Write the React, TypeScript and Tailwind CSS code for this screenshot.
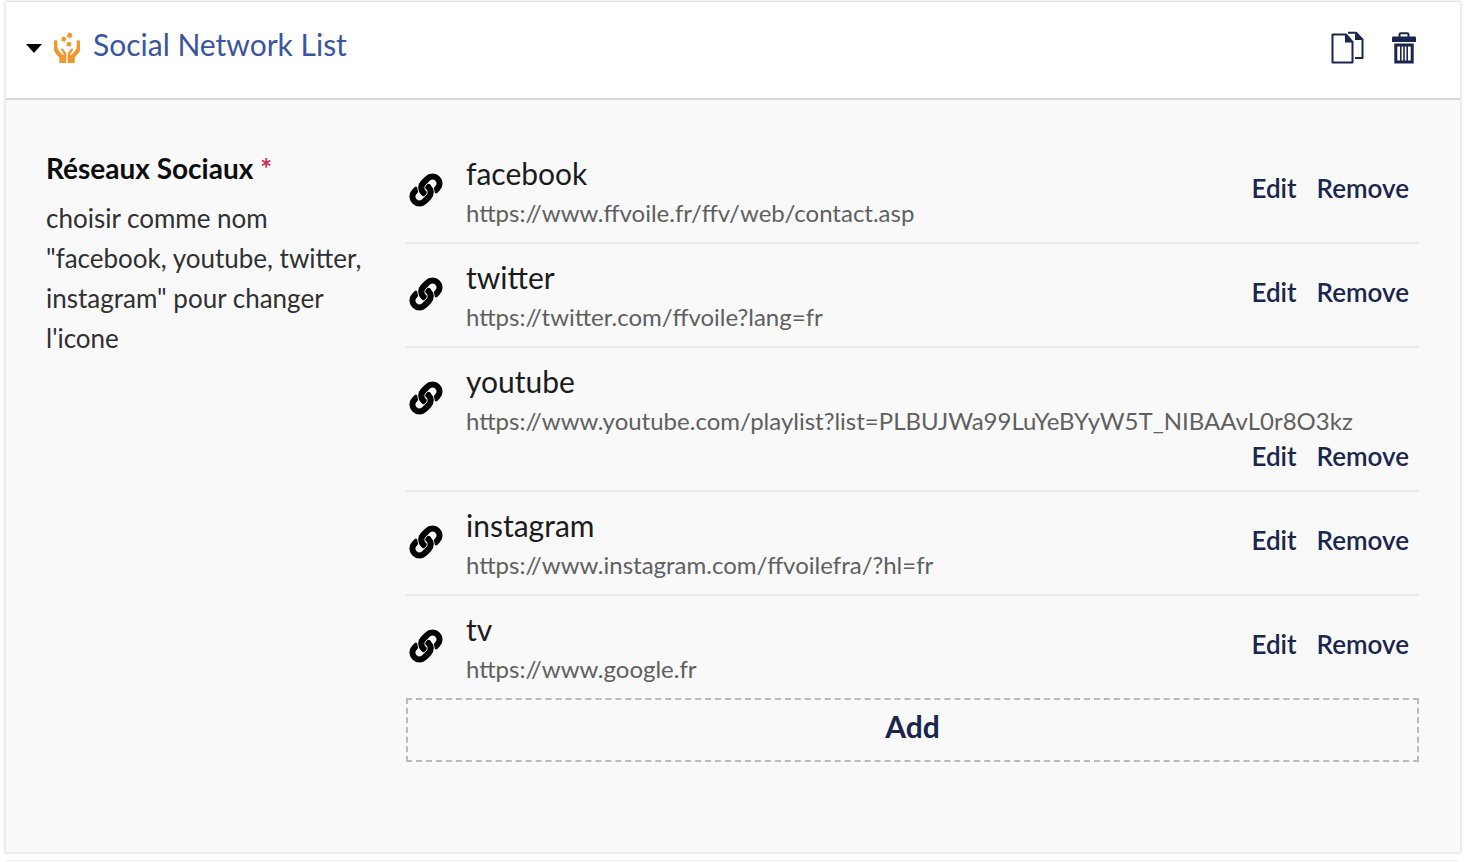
import React from 'react';
import { FaLink } from 'react-icons/fa';

type Network = { name: string; url: string };

const networks: Network[] = [
  { name: 'facebook', url: 'https://www.ffvoile.fr/ffv/web/contact.asp' },
  { name: 'twitter', url: 'https://twitter.com/ffvoile?lang=fr' },
  {
    name: 'youtube',
    url: 'https://www.youtube.com/playlist?list=PLBUJWa99LuYeBYyW5T_NIBAAvL0r8O3kz',
  },
  { name: 'instagram', url: 'https://www.instagram.com/ffvoilefra/?hl=fr' },
  { name: 'tv', url: 'https://www.google.fr' },
];

function HandsIcon() {
  return (
    <svg viewBox="0 0 26 32" className="h-8 w-[26px]" fill="#f0982c" aria-hidden="true">
      <path d="M0 9.500Q0 8 1.700 8t1.700 1.500v6.500l1.600 3 3.200 3.600q.8.700 1.300.2t0-1.300l-2.300-3.300q-.6-1.300.4-1.700 1-.3 1.800.7l2.200 3q.7 1 .7 2.200V31H5.300v-5.500L1 20.500q-1-1.200-1-2.500z" />
      <path d="M26 9.500Q26 8 24.300 8t-1.700 1.500v6.500l-1.600 3-3.200 3.600q-.8.700-1.300.2t0-1.300l2.300-3.300q.6-1.300-.4-1.700-1-.3-1.800.7l-2.200 3q-.7 1-.7 2.200V31h7v-5.500l4.300-5q1-1.200 1-2.500z" />
      <rect x="13.300" y="1" width="4.800" height="4.800" rx="1.200" transform="rotate(20 15.700 3.400)" />
      <rect x="7.500" y="5" width="4.400" height="4.400" rx="1.200" transform="rotate(20 9.700 7.200)" />
      <rect x="12.700" y="10" width="4.400" height="4.400" rx="1.200" transform="rotate(20 14.900 12.200)" />
    </svg>
  );
}

function CopyIcon() {
  return (
    <svg viewBox="0 0 34 34" className="h-[34px] w-[34px]" fill="none" stroke="#1b264f" strokeWidth="2" strokeLinejoin="round" aria-hidden="true">
      <path d="M2.500 3.500H16l6.500 7.500v20.500h-20z" />
      <path d="M15 3v8.500h7.500z" fill="#1b264f" stroke="none" />
      <path d="M18 1.800h8l6.500 6.700v18.500H25" />
      <path d="M25 1.500V9h7.500z" fill="#1b264f" stroke="none" />
    </svg>
  );
}

function TrashIcon() {
  return (
    <svg viewBox="0 0 24 32" className="h-8 w-6" fill="none" stroke="#1b264f" aria-hidden="true">
      <path d="M7.500 5V2.500q0-1.300 1.300-1.300h6.400q1.300 0 1.300 1.300V5" strokeWidth="2" />
      <path d="M0 5.500q0-1 1-1h22q1 0 1 1V10H0z" fill="#1b264f" stroke="none" />
      <path d="M3.800 13h16.400v17H3.800z" strokeWidth="3" />
      <path d="M8.800 13v17M12 13v17M15.200 13v17" strokeWidth="1.600" />
    </svg>
  );
}

function NetworkRow({ name, url }: Network) {
  return (
    <li className="flex items-start border-b-2 border-[#e9e9eb] pt-[13px] pr-[10px] pb-[9px] pl-1 last:border-transparent">
      <div className="flex h-[74px] w-14 shrink-0 items-center">
        <FaLink className="h-8 w-8 overflow-visible stroke-black stroke-[18px] text-black" aria-hidden="true" />
      </div>
      <div className="flex min-w-0 flex-1 flex-wrap items-center">
        <div className="leading-10">
          <div className="text-[30px] text-[#1c1c1c]">{name}</div>
          <div className="text-2xl leading-10 text-[#606060]">{url}</div>
        </div>
        <div className="ml-auto flex gap-5 pb-[10px] text-[26px] leading-[30px] font-semibold text-[#1b264f]">
          <button type="button" aria-label={`Edit ${name}`}>Edit</button>
          <button type="button" aria-label={`Remove ${name}`}>Remove</button>
        </div>
      </div>
    </li>
  );
}

export default function App() {
  return (
    <div className="bg-white px-[6px] pt-[2px] font-['Lato',sans-serif]">
      <section className="mr-[-2px] bg-[#f9f9f9] shadow-[0_0_3px_1px_rgba(0,0,0,0.15)]">
        <header className="flex h-[98px] items-center justify-between border-b-2 border-[#d8d7d9] bg-white pr-11 pb-1 pl-5">
          <button type="button" className="flex items-center pb-2 text-[30px] leading-10 text-[#3b54a0]">
            <svg viewBox="0 0 16 9" className="mt-2 h-[9px] w-4" aria-hidden="true">
              <path d="M0 0h16L8 9z" fill="#000" />
            </svg>
            <span className="mt-2 mr-[13px] ml-3">
              <HandsIcon />
            </span>
            Social Network List
          </button>
          <div className="flex items-center gap-7">
            <button type="button" aria-label="Copy"><CopyIcon /></button>
            <button type="button" aria-label="Delete"><TrashIcon /></button>
          </div>
        </header>
        <div className="flex items-start gap-10 pt-10 pr-[41px] pb-[90px] pl-10">
          <div className="w-80 shrink-0 pt-2">
            <h2 className="text-[28px] leading-10 font-bold text-[#0d0d0d]">
              Réseaux Sociaux <span className="text-[#cf2f55]">*</span>
            </h2>
            <p className="mt-[10px] text-[26px] leading-10 text-[#303033]">
              choisir comme nom "facebook, youtube, twitter, instagram" pour changer l'icone
            </p>
          </div>
          <div className="min-w-0 flex-1">
            <ul>
              {networks.map((network) => (
                <NetworkRow key={network.name} {...network} />
              ))}
            </ul>
            <button
              type="button"
              className="-mt-[2px] block h-16 w-full border-2 border-dashed border-[#bbbabf] pb-[7px] text-[30px] font-bold text-[#1b264f]"
            >
              Add
            </button>
          </div>
        </div>
      </section>
      <div className="mt-2 border-t border-[#f0f0f0]" />
    </div>
  );
}
